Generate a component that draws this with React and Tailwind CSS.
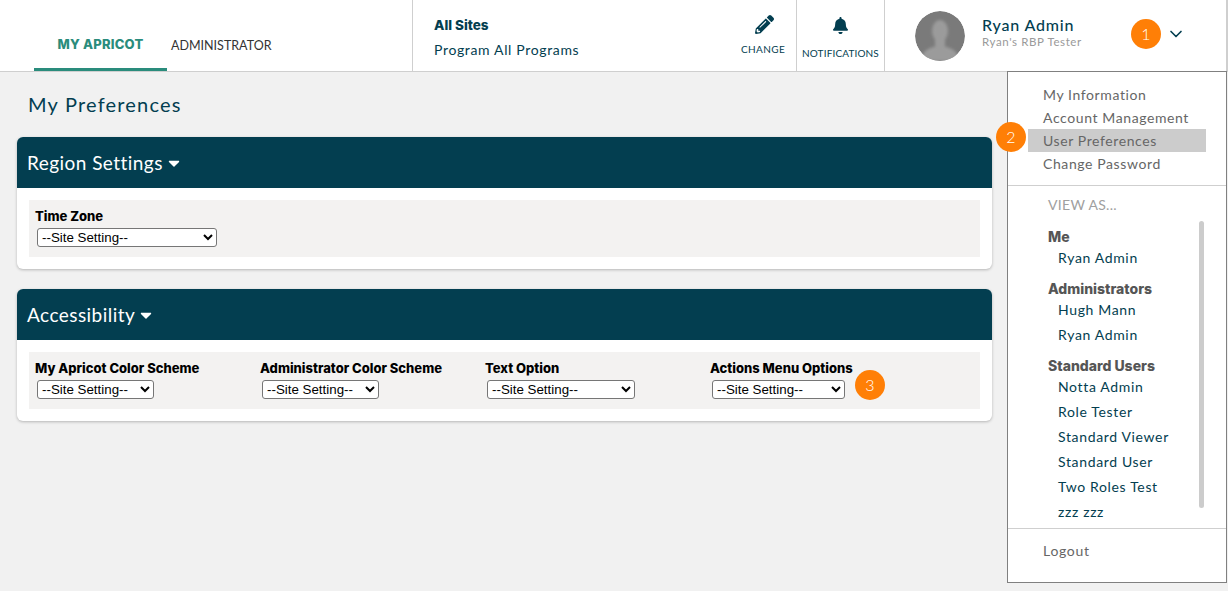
import React from "react";
import { FaPencilAlt, FaBell, FaCaretDown } from "react-icons/fa";
import { LuChevronDown } from "react-icons/lu";

function Badge({ n, className }) {
  return (
    <span
      className={
        "absolute flex h-[30px] w-[30px] items-center justify-center rounded-full bg-[#ff7f06] text-[16px] font-light text-white " +
        className
      }
    >
      {n}
    </span>
  );
}

function Field({ label, width }) {
  return (
    <div className="w-[225px] shrink-0">
      <div className="font-['Inter',sans-serif] text-[13px] leading-[16px] font-extrabold text-black">{label}</div>
      <select
        style={{ width }}
        className="mt-[4px] ml-[2px] block h-[19px] rounded-[3px] border border-[#767676] bg-white font-['Liberation_Sans',sans-serif] text-[13.33px] leading-none text-black"
      >
        <option>--Site Setting--</option>
      </select>
    </div>
  );
}

function Card({ title, children }) {
  return (
    <section className="rounded-[6px] bg-white shadow-[0_1px_3px_rgba(0,0,0,0.25)]">
      <h2 className="flex h-[51px] items-center gap-[2px] rounded-t-[6px] bg-[#033e50] pt-[1px] pl-[10px] text-[19px] tracking-[0.45px] text-white">
        {title}
        <FaCaretDown className="text-[18px]" />
      </h2>
      <div className="p-[12px]">
        <div className="flex h-[57px] bg-[#f3f2f1] pt-[8px] pl-[6px]">{children}</div>
      </div>
    </section>
  );
}

function UserLink({ name }) {
  return <li className="pl-[10px] text-[14px] leading-[25px] tracking-[0.65px] text-[#033e50]">{name}</li>;
}

function GroupTitle({ children, className }) {
  return (
    <div className={"font-['Inter',sans-serif] text-[14px] leading-[16px] font-extrabold text-[#555] " + className}>
      {children}
    </div>
  );
}

export default function App() {
  return (
    <div className="relative h-[591px] w-[1228px] overflow-hidden bg-[#f1f1f1] font-['Lato',sans-serif]">
      <header className="flex h-[72px] border-r-2 border-b border-[#cfcfcf] bg-white">
        <nav className="flex w-[413px] items-end border-r border-[#cfcfcf] pl-[34px]">
          <a className="flex h-[71px] w-[133px] items-center justify-center border-b-[3px] border-[#2a8c7c] pt-[22px] font-['Inter',sans-serif] text-[13px] font-extrabold tracking-[0.2px] text-[#2a8c7c]">
            MY APRICOT
          </a>
          <a className="flex h-[71px] items-center pt-[21px] pl-[4px] text-[12.5px] text-[#333]">ADMINISTRATOR</a>
        </nav>

        <div className="flex w-[322px] flex-col pt-[16px] pl-[21px] text-[#033e50]">
          <div className="font-['Inter',sans-serif] text-[13.5px] leading-[18px] font-extrabold">All Sites</div>
          <div className="mt-[7px] text-[14px] leading-[18px] tracking-[0.65px]">Program All Programs</div>
        </div>

        <div className="relative w-[62px] border-r border-[#cfcfcf] text-[#033e50]">
          <FaPencilAlt className="absolute top-[15px] left-[20px] text-[19px]" />
          <span className="absolute top-[43px] left-[6px] text-[10px] leading-[13px] tracking-[0.4px]">CHANGE</span>
        </div>

        <div className="relative w-[88px] border-r border-[#cfcfcf] text-[#033e50]">
          <FaBell className="absolute top-[17px] left-[35px] text-[17px]" />
          <span className="absolute top-[47px] left-[5px] text-[10px] leading-[13px] tracking-[0.15px]">NOTIFICATIONS</span>
        </div>

        <div className="flex flex-1 items-start pt-[11px] pl-[30px]">
          <svg width="50" height="50" viewBox="0 0 50 50" className="shrink-0 rounded-full">
            <defs>
              <filter id="soft">
                <feGaussianBlur stdDeviation="1.4" />
              </filter>
            </defs>
            <circle cx="25" cy="25" r="25" fill="#7a7a7a" />
            <g filter="url(#soft)" fill="#9b9b9b">
              <ellipse cx="25" cy="20" rx="8" ry="11" />
              <rect x="20" y="27" width="10" height="10" />
              <path d="M6 50 C7 38 16 36 25 35 C34 36 43 38 44 50 Z" />
            </g>
          </svg>
          <div className="ml-[17px] w-[112px] shrink-0 pt-[4px]">
            <div className="text-[16px] leading-[20px] font-medium tracking-[0.8px] text-[#033e50]">Ryan Admin</div>
            <div className="text-[11.5px] leading-[14px] tracking-[0.6px] text-[#9a9a9a]">Ryan's RBP Tester</div>
          </div>
          <LuChevronDown className="mt-[13px] ml-[72px] text-[20px] text-[#033e50]" />
        </div>
      </header>

      <main className="w-[992px] pt-[20px] pl-[17px]">
        <h1 className="pl-[11px] text-[20px] leading-[24px] tracking-[1.2px] text-[#033e50]">My Preferences</h1>
        <div className="mt-[21px] flex flex-col gap-[20px]">
          <Card title="Region Settings">
            <Field label="Time Zone" width={180} />
          </Card>
          <Card title="Accessibility">
            <Field label="My Apricot Color Scheme" width={117} />
            <Field label="Administrator Color Scheme" width={117} />
            <Field label="Text Option" width={148} />
            <Field label="Actions Menu Options" width={133} />
          </Card>
        </div>
      </main>

      <aside className="absolute top-[71px] left-[1007px] h-[512px] w-[220px] border border-[#808080] bg-white">
        <ul className="pt-[11px] pr-[20px] pl-[20px] text-[14px] leading-[23px] tracking-[0.6px] text-[#666]">
          <li className="pl-[15px]">My Information</li>
          <li className="pl-[15px]">Account Management</li>
          <li className="bg-[#cccccc] pl-[15px]">User Preferences</li>
          <li className="pl-[15px]">Change Password</li>
        </ul>
        <div className="mt-[10px] border-t border-[#cfcfcf]" />
        <div className="relative pl-[40px]">
          <div className="pt-[10px] text-[14px] leading-[18px] tracking-[0.3px] text-[#a0a0a0]">VIEW AS...</div>
          <span className="absolute top-[35px] left-[191px] h-[287px] w-[5px] rounded-full bg-[#cccccc]" />
          <GroupTitle className="mt-[15px]">Me</GroupTitle>
          <ul>
            <UserLink name="Ryan Admin" />
          </ul>
          <GroupTitle className="mt-[11px]">Administrators</GroupTitle>
          <ul>
            <UserLink name="Hugh Mann" />
            <UserLink name="Ryan Admin" />
          </ul>
          <GroupTitle className="mt-[11px]">Standard Users</GroupTitle>
          <ul>
            <UserLink name="Notta Admin" />
            <UserLink name="Role Tester" />
            <UserLink name="Standard Viewer" />
            <UserLink name="Standard User" />
            <UserLink name="Two Roles Test" />
            <UserLink name="zzz zzz" />
          </ul>
        </div>
        <div className="mt-[4px] border-t border-[#cfcfcf] pt-[12px] pl-[35px] text-[14px] leading-[20px] tracking-[0.7px] text-[#666]">
          Logout
        </div>
      </aside>

      <Badge n="1" className="top-[19px] left-[1131px]" />
      <Badge n="2" className="top-[122px] left-[996px]" />
      <Badge n="3" className="top-[370px] left-[855px]" />
    </div>
  );
}
